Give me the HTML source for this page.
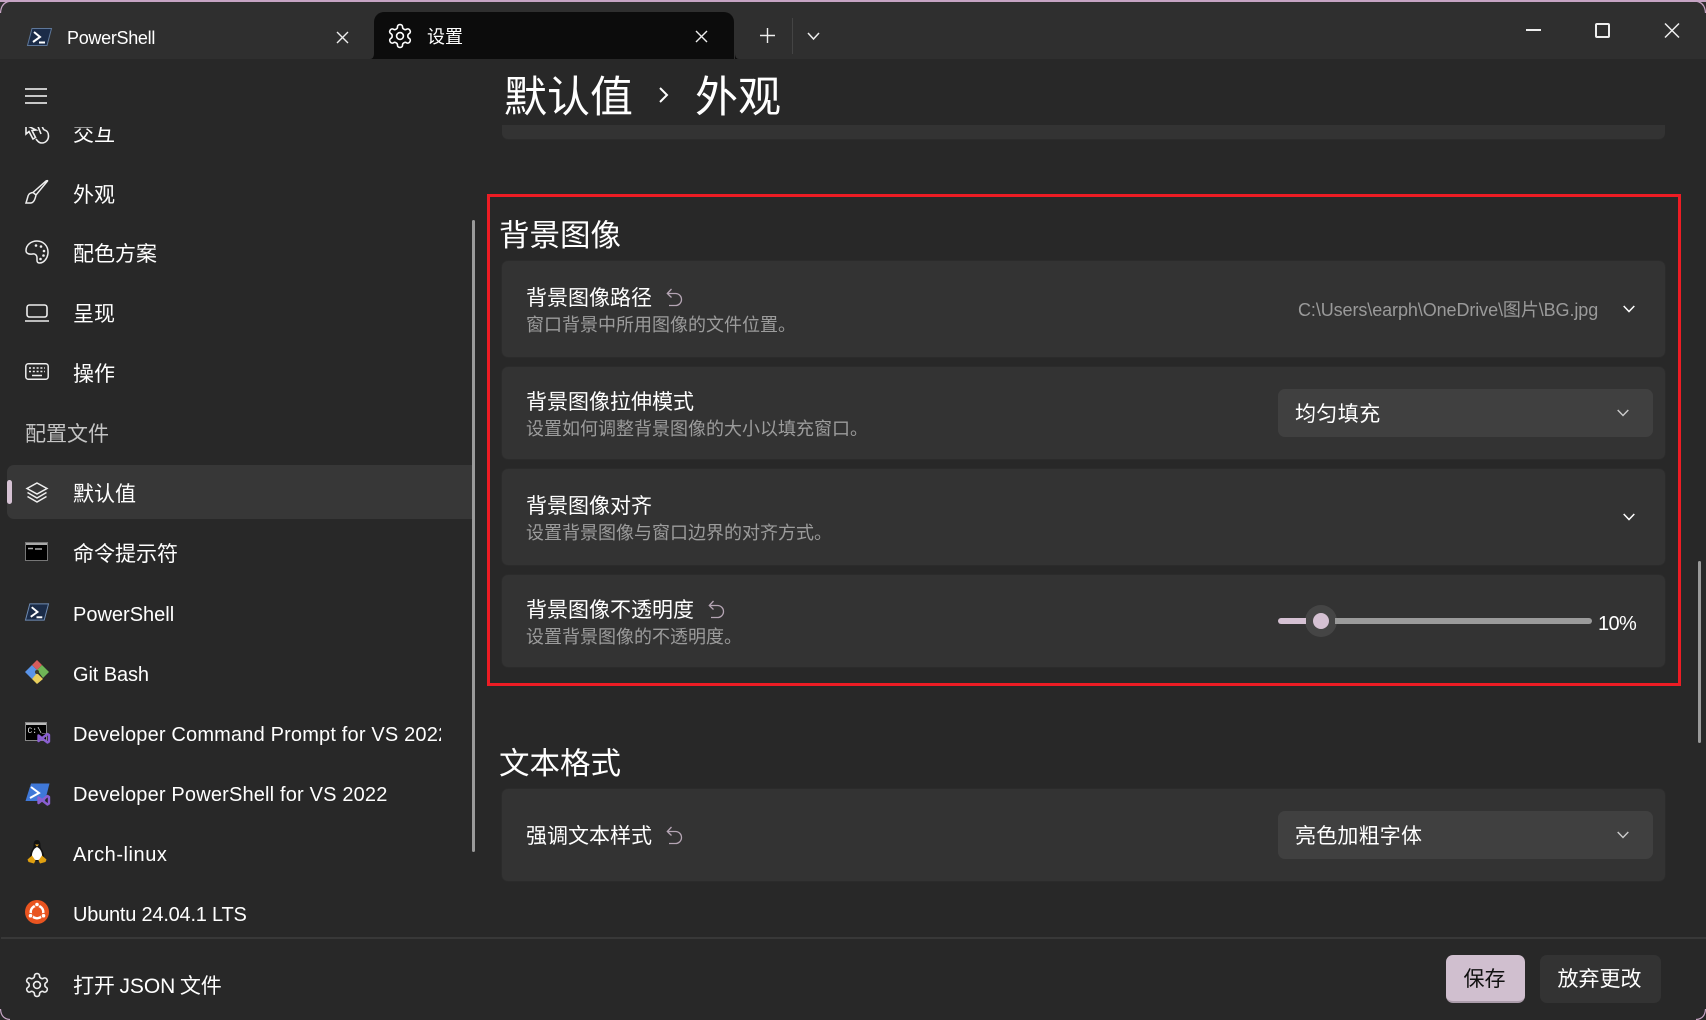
<!DOCTYPE html>
<html lang="zh-CN"><head><meta charset="utf-8"><title>设置</title>
<style>
*{box-sizing:border-box;margin:0;padding:0}
html,body{width:1706px;height:1020px;overflow:hidden;background:#282828}
body{position:relative;font-family:"Liberation Sans","Noto Sans CJK SC",sans-serif;color:#fff}
.a{position:absolute}
.t{position:absolute;white-space:nowrap;line-height:30px;height:30px}
.nav{font-size:21px;left:73px}
.en{font-size:20px;letter-spacing:-.1px}
.card{position:absolute;left:502px;width:1163px;background:#333;border-radius:6px;box-shadow:0 0 0 1px #2b2b2b}
.ti{font-size:21px;left:526px}
.de{font-size:18px;left:526px;color:#9c9c9c}
.h2{font-size:30.5px;left:499px;line-height:40px;height:40px}
.combo{position:absolute;left:1278px;width:375px;height:48px;background:#404040;border-radius:7px}
svg{position:absolute;overflow:visible;fill:none}
</style></head><body>

<!-- title bar -->
<div class="a" style="left:0;top:0;width:1706px;height:59px;background:#2f2f2f"></div>
<div class="a" style="left:0;top:0;width:1706px;height:1.5px;background:#c6a4c4"></div>
<svg style="left:0;top:0" width="1706" height="1020">
<path d="M0.5 13Q1 1.5 12 1" stroke="#c6a4c4" stroke-width="1.2"/>
<path d="M1705.5 13Q1705 1.5 1694 1" stroke="#c6a4c4" stroke-width="1.2"/>
<path d="M0.5 1009Q1 1019 10 1019.5" stroke="#c6a4c4" stroke-width="1.2"/>
<path d="M1705.5 1009Q1705 1019 1696 1019.5" stroke="#c6a4c4" stroke-width="1.2"/>
</svg>

<!-- tab 1 -->
<svg style="left:27px;top:28px" width="25" height="18" viewBox="0 0 25 18"><path d="M5 .5H24.5L20 17.5H.5Z" fill="#1b2c48" stroke="#5e7799"/><path d="M7 4L13 9L6 14" stroke="#fff" stroke-width="2"/><path d="M12 14.5H18" stroke="#fff" stroke-width="2"/></svg>
<div class="t" style="left:67px;top:23px;font-size:18px;letter-spacing:-.3px">PowerShell</div>
<svg style="left:336px;top:31px" width="13" height="13" stroke="#eee" stroke-width="1.4"><path d="M1 1L12 12M12 1L1 12"/></svg>

<!-- tab 2 -->
<div class="a" style="left:374px;top:12px;width:360px;height:47px;background:#0c0c0c;border-radius:10px 10px 0 0"></div>
<svg style="left:370px;top:53px" width="370" height="6" fill="#0c0c0c"><path d="M0 6Q4 6 4 0V6ZM369 6Q365 6 365 0V6Z" fill="#0c0c0c"/></svg>
<svg style="left:388px;top:24px" width="24" height="24" viewBox="1.5 1.5 21 21" stroke="#fff" stroke-width="1.4"><path d="M12.22 2h-.44a2 2 0 0 0-2 2v.18a2 2 0 0 1-1 1.73l-.43.25a2 2 0 0 1-2 0l-.15-.08a2 2 0 0 0-2.73.73l-.22.38a2 2 0 0 0 .73 2.73l.15.1a2 2 0 0 1 1 1.72v.51a2 2 0 0 1-1 1.74l-.15.09a2 2 0 0 0-.73 2.73l.22.38a2 2 0 0 0 2.73.73l.15-.08a2 2 0 0 1 2 0l.43.25a2 2 0 0 1 1 1.73V20a2 2 0 0 0 2 2h.44a2 2 0 0 0 2-2v-.18a2 2 0 0 1 1-1.73l.43-.25a2 2 0 0 1 2 0l.15.08a2 2 0 0 0 2.73-.73l.22-.39a2 2 0 0 0-.73-2.73l-.15-.08a2 2 0 0 1-1-1.74v-.5a2 2 0 0 1 1-1.74l.15-.09a2 2 0 0 0 .73-2.73l-.22-.38a2 2 0 0 0-2.73-.73l-.15.08a2 2 0 0 1-2 0l-.43-.25a2 2 0 0 1-1-1.73V4a2 2 0 0 0-2-2z"/><circle cx="12" cy="12" r="3"/></svg>
<div class="t" style="left:427px;top:22px;font-size:18px">设置</div>
<svg style="left:695px;top:30px" width="13" height="13" stroke="#eee" stroke-width="1.4"><path d="M1 1L12 12M12 1L1 12"/></svg>

<!-- new tab -->
<svg style="left:760px;top:28px" width="15" height="15" stroke="#eee" stroke-width="1.4"><path d="M7.5 0V15M0 7.5H15"/></svg>
<div class="a" style="left:792px;top:18px;width:1px;height:36px;background:#444"></div>
<svg style="left:807px;top:32px" width="13" height="8" stroke="#eee" stroke-width="1.5"><path d="M1 1L6.5 7L12 1"/></svg>

<!-- window controls -->
<div class="a" style="left:1526px;top:29px;width:15px;height:2px;background:#eee"></div>
<div class="a" style="left:1595px;top:23px;width:15px;height:15px;border:2px solid #eee;border-radius:2px"></div>
<svg style="left:1664px;top:23px" width="16" height="15" stroke="#eee" stroke-width="1.5"><path d="M1 .5L15 14.5M15 .5L1 14.5"/></svg>

<!-- page heading -->
<div class="t" style="left:504px;top:73px;font-size:43px;line-height:50px;height:50px">默认值</div>
<svg style="left:658px;top:86px" width="11" height="18" stroke="#fff" stroke-width="2"><path d="M2 2L9 9L2 16"/></svg>
<div class="t" style="left:695px;top:73px;font-size:43px;line-height:50px;height:50px">外观</div>

<!-- scrolled card remnant -->
<div class="a" style="left:502px;top:125px;width:1163px;height:14px;background:#333;border-radius:0 0 6px 6px;box-shadow:0 1px 0 #2b2b2b"></div>

<!-- background image section -->
<div class="t h2" style="top:216px">背景图像</div>

<div class="card" style="top:261px;height:96px"></div>
<div class="t ti" style="top:284px">背景图像路径</div>
<svg style="left:666px;top:288px" width="16" height="19" viewBox="0 0 16 19" stroke="#b5a5b4" stroke-width="1.3"><path d="M5.5 1L1.3 5.5L5.5 9.5M1.5 5.5H9.5A4.9 4.9 0 0 1 9.5 17.5H3"/></svg>
<div class="t de" style="top:310px">窗口背景中所用图像的文件位置。</div>
<div class="t" style="left:1298px;top:295px;font-size:18px;color:#9a9a9a;letter-spacing:-.09px">C:\Users\earph\OneDrive\图片\BG.jpg</div>
<svg style="left:1623px;top:305px" width="12" height="8" stroke="#fff" stroke-width="1.5"><path d="M.7 1L6 6.5L11.3 1"/></svg>

<div class="card" style="top:367px;height:92px"></div>
<div class="t ti" style="top:388px">背景图像拉伸模式</div>
<div class="t de" style="top:414px">设置如何调整背景图像的大小以填充窗口。</div>
<div class="combo" style="top:389px"></div>
<div class="t" style="left:1295px;top:400px;font-size:21px;letter-spacing:.4px">均匀填充</div>
<svg style="left:1617px;top:409px" width="12" height="8" stroke="#ccc" stroke-width="1.4"><path d="M.7 1L6 6.5L11.3 1"/></svg>

<div class="card" style="top:469px;height:96px"></div>
<div class="t ti" style="top:492px">背景图像对齐</div>
<div class="t de" style="top:518px">设置背景图像与窗口边界的对齐方式。</div>
<svg style="left:1623px;top:513px" width="12" height="8" stroke="#fff" stroke-width="1.5"><path d="M.7 1L6 6.5L11.3 1"/></svg>

<div class="card" style="top:575px;height:92px"></div>
<div class="t ti" style="top:596px">背景图像不透明度</div>
<svg style="left:708px;top:600px" width="16" height="19" viewBox="0 0 16 19" stroke="#b5a5b4" stroke-width="1.3"><path d="M5.5 1L1.3 5.5L5.5 9.5M1.5 5.5H9.5A4.9 4.9 0 0 1 9.5 17.5H3"/></svg>
<div class="t de" style="top:622px">设置背景图像的不透明度。</div>
<div class="a" style="left:1305px;top:605px;width:32px;height:32px;background:#454545;border-radius:50%"></div>
<div class="a" style="left:1278px;top:618px;width:28px;height:6px;background:#d5c1d3;border-radius:3px 0 0 3px"></div>
<div class="a" style="left:1335px;top:618px;width:257px;height:6px;background:#9b9b9b;border-radius:0 3px 3px 0"></div>
<div class="a" style="left:1313px;top:613px;width:16px;height:16px;background:#d5c1d3;border-radius:50%"></div>
<div class="t" style="left:1598px;top:609px;font-size:20px;letter-spacing:-.6px">10%</div>

<!-- red annotation -->
<div class="a" style="left:487px;top:194px;width:1194px;height:492px;border:3px solid #ed1c24"></div>

<!-- text format section -->
<div class="t h2" style="top:744px">文本格式</div>
<div class="card" style="top:789px;height:92px"></div>
<div class="t ti" style="top:822px">强调文本样式</div>
<svg style="left:666px;top:826px" width="16" height="19" viewBox="0 0 16 19" stroke="#b5a5b4" stroke-width="1.3"><path d="M5.5 1L1.3 5.5L5.5 9.5M1.5 5.5H9.5A4.9 4.9 0 0 1 9.5 17.5H3"/></svg>
<div class="combo" style="top:811px"></div>
<div class="t" style="left:1295px;top:822px;font-size:21px;letter-spacing:.2px">亮色加粗字体</div>
<svg style="left:1617px;top:831px" width="12" height="8" stroke="#ccc" stroke-width="1.4"><path d="M.7 1L6 6.5L11.3 1"/></svg>

<!-- hamburger -->
<div class="a" style="left:25px;top:88px;width:22px;height:1.6px;background:#c8c8c8"></div>
<div class="a" style="left:25px;top:95px;width:22px;height:1.6px;background:#c8c8c8"></div>
<div class="a" style="left:25px;top:102px;width:22px;height:1.6px;background:#c8c8c8"></div>

<!-- sidebar selection and scrollbar -->
<div class="a" style="left:7px;top:465px;width:465px;height:54px;background:#373737;border-radius:7px 0 0 7px"></div>
<div class="a" style="left:7px;top:480px;width:5px;height:24px;background:#d5c1d3;border-radius:3px"></div>
<div class="a" style="left:472px;top:220px;width:3px;height:632px;background:#9a9a9a;border-radius:2px"></div>
<div class="a" style="left:1698px;top:561px;width:3px;height:182px;background:#9a9a9a;border-radius:2px"></div>

<!-- nav -->
<div class="a" style="left:0;top:0;width:471px;height:938px;clip-path:inset(127px 0 0 0)">
<svg style="left:25px;top:119px" width="24" height="24" viewBox="0 0 24 24" stroke="#eee" stroke-width="1.6"><path d="M1 6V15L4 12.5L8 20L10.5 18.5L7 11.5L11 11L1 6ZM12 5L16 15M16 5C18 9 18 10.5 19.5 11C22 11.5 23.5 14 23.5 17C23.5 21 20.5 24 17 24C14 24 13 22.5 11 20"/></svg>
<div class="t nav" style="top:120px">交互</div>

<svg style="left:25px;top:180px" width="24" height="24" viewBox="0 0 24 24" stroke="#eee" stroke-width="1.5"><path d="M22.5 1L11 15L8 12.5L21 1C22 .5 23 .5 22.5 1ZM8 12.5C4 13 3 15 2.5 18L1 23H5.5C8 23 10 20 11 15"/></svg>
<div class="t nav" style="top:181px">外观</div>

<svg style="left:25px;top:240px" width="24" height="24" viewBox="0 0 24 24" stroke="#eee" stroke-width="1.5"><path d="M12 1C18.5 1 23 6 23 12C23 18 19 23 14.5 23C11.5 23 12 20 12 18C12 15 10 13.5 7.5 14C5 14.5 1 14 1 10.5C1 5 6 1 12 1Z"/><g fill="#eee" stroke="none"><circle cx="11" cy="5.5" r="1.3"/><circle cx="16" cy="6.5" r="1.3"/><circle cx="19" cy="11" r="1.3"/><circle cx="18.5" cy="15.5" r="1.3"/><circle cx="15.5" cy="19" r="1.3"/></g></svg>
<div class="t nav" style="top:240px">配色方案</div>

<svg style="left:25px;top:304px" width="24" height="18" viewBox="0 0 24 18" stroke="#eee" stroke-width="1.6"><rect x="2" y="1" width="20" height="12" rx="2.5"/><path d="M0 17H24"/></svg>
<div class="t nav" style="top:300px">呈现</div>

<svg style="left:25px;top:363px" width="24" height="17" viewBox="0 0 24 17" stroke="#eee" stroke-width="1.5"><rect x=".8" y=".8" width="22.4" height="15.4" rx="2.5"/><path d="M4 5H20M4 8.5H20" stroke-dasharray="2 1.8"/><path d="M7 12.5H17"/></svg>
<div class="t nav" style="top:360px">操作</div>

<div class="t nav" style="top:420px;left:25px;color:#c4c4c4">配置文件</div>

<svg style="left:26px;top:482px" width="22" height="21" viewBox="0 0 22 21" stroke="#eee" stroke-width="1.5"><path d="M11 1L21 6.5L11 12L1 6.5Z"/><path d="M1.5 10.5L11 16L20.5 10.5M1.5 14.5L11 20L20.5 14.5"/></svg>
<div class="t nav" style="top:480px">默认值</div>

<svg style="left:25px;top:542px" width="23" height="19" viewBox="0 0 23 19"><rect x=".5" y=".5" width="22" height="18" fill="#000" stroke="#777"/><rect x="1" y="1" width="21" height="2" fill="#aaa"/><path d="M3 6.5H8M10 7H17" stroke="#aaa" stroke-width="1.5"/></svg>
<div class="t nav" style="top:540px">命令提示符</div>

<svg style="left:25px;top:603px" width="24" height="18" viewBox="0 0 25 18"><path d="M5 .5H24.5L20 17.5H.5Z" fill="#1b2c48" stroke="#6f8cb4"/><path d="M7 4L13 9L6 14" stroke="#fff" stroke-width="2"/><path d="M12 14.5H18" stroke="#fff" stroke-width="2"/></svg>
<div class="t nav en" style="top:600px;letter-spacing:0">PowerShell</div>

<svg style="left:25px;top:660px" width="24" height="24" viewBox="0 0 24 24"><path d="M0 12L7 5L14 12L7 19Z" fill="#5a94e8"/><path d="M7 5L12 0L17 5L12 10Z" fill="#d75c5c"/><path d="M12 10L17 5L24 12L18 18Z" fill="#6fb556"/><path d="M7 19L12 13L18 19L12 24Z" fill="#e9cf5c"/><circle cx="12" cy="12" r="2" fill="#3c3c28"/></svg>
<div class="t nav en" style="top:660px">Git Bash</div>

<svg style="left:25px;top:722px" width="25" height="23" viewBox="0 0 25 23"><rect x=".5" y=".5" width="21" height="18" fill="#000" stroke="#888"/><rect x="1" y="1" width="20" height="2" fill="#bbb"/><text x="2.5" y="11" font-size="8" fill="#eee" font-family="Liberation Mono">C:\_</text><path d="M13.5 13.5L22.5 20.5L24 19.5V13L22.5 12L13.5 19Z" stroke="#8a5fd1" stroke-width="2.4" stroke-linejoin="round"/></svg>
<div class="a" style="left:0;top:720px;width:441px;height:30px;overflow:hidden"><div class="t nav en" style="top:0;letter-spacing:.17px">Developer Command Prompt for VS 2022</div></div>

<svg style="left:25px;top:783px" width="25" height="24" viewBox="0 0 25 24"><path d="M6 .5H24.5L20 18H.5Z" fill="#3f78d8"/><path d="M6 4L14 10L5 15" stroke="#fff" stroke-width="2"/><path d="M13.5 14.5L22.5 21.5L24 20.5V14L22.5 13L13.5 20Z" stroke="#8a5fd1" stroke-width="2.4" stroke-linejoin="round"/></svg>
<div class="t nav en" style="top:780px;letter-spacing:.17px">Developer PowerShell for VS 2022</div>

<svg style="left:27px;top:840px" width="20" height="24" viewBox="0 0 20 24"><path d="M10 0C7 0 6.5 3 6.5 6C6.5 9 3 11 3 16C3 19 6 21 10 21C14 21 17 19 17 16C17 11 13.5 9 13.5 6C13.5 3 13 0 10 0Z" fill="#111"/><path d="M10 7C6.5 8.5 4.5 13 5 17C5.5 21 14.5 21 15 17C15.5 13 13.5 8.5 10 7Z" fill="#fff"/><path d="M8 4.5L10 6.5L12 4.5Z" fill="#e8a820"/><path d="M5 15.5L.5 19.5L1.5 22L7 23.5L8.5 20.5ZM15 15.5L19.5 19.5L18.5 22L13 23.5L11.5 20.5Z" fill="#e0a010"/></svg>
<div class="t nav en" style="top:840px;letter-spacing:.55px">Arch-linux</div>

<svg style="left:25px;top:900px" width="24" height="24" viewBox="0 0 24 24"><circle cx="12" cy="12" r="12" fill="#e95420"/><circle cx="12" cy="12" r="6.3" stroke="#fff" stroke-width="2.4"/><g fill="#fff" stroke="#e95420" stroke-width="1"><circle cx="12" cy="4.5" r="2.3"/><circle cx="5.5" cy="15.7" r="2.3"/><circle cx="18.5" cy="15.7" r="2.3"/></g></svg>
<div class="t nav en" style="top:900px;letter-spacing:-.22px">Ubuntu 24.04.1 LTS</div>
</div>

<!-- footer -->
<div class="a" style="left:1px;top:937px;width:1705px;height:2px;background:#383838"></div>
<svg style="left:25px;top:973px" width="24" height="24" viewBox="1.5 1.5 21 21" stroke="#eee" stroke-width="1.4"><path d="M12.22 2h-.44a2 2 0 0 0-2 2v.18a2 2 0 0 1-1 1.73l-.43.25a2 2 0 0 1-2 0l-.15-.08a2 2 0 0 0-2.73.73l-.22.38a2 2 0 0 0 .73 2.73l.15.1a2 2 0 0 1 1 1.72v.51a2 2 0 0 1-1 1.74l-.15.09a2 2 0 0 0-.73 2.73l.22.38a2 2 0 0 0 2.73.73l.15-.08a2 2 0 0 1 2 0l.43.25a2 2 0 0 1 1 1.73V20a2 2 0 0 0 2 2h.44a2 2 0 0 0 2-2v-.18a2 2 0 0 1 1-1.73l.43-.25a2 2 0 0 1 2 0l.15.08a2 2 0 0 0 2.73-.73l.22-.39a2 2 0 0 0-.73-2.73l-.15-.08a2 2 0 0 1-1-1.74v-.5a2 2 0 0 1 1-1.74l.15-.09a2 2 0 0 0 .73-2.73l-.22-.38a2 2 0 0 0-2.73-.73l-.15.08a2 2 0 0 1-2 0l-.43-.25a2 2 0 0 1-1-1.73V4a2 2 0 0 0-2-2z"/><circle cx="12" cy="12" r="3"/></svg>
<div class="t nav" style="top:972px;word-spacing:-1px;letter-spacing:-.1px">打开 JSON 文件</div>

<div class="a" style="left:1446px;top:955px;width:79px;height:48px;background:#d0bfcf;border-radius:7px;border-bottom:2px solid #ab9caa"></div>
<div class="t" style="left:1445px;width:79px;text-align:center;top:965px;font-size:21px;color:#111">保存</div>
<div class="a" style="left:1540px;top:955px;width:121px;height:48px;background:#333;border-radius:7px"></div>
<div class="t" style="left:1539px;width:121px;text-align:center;top:965px;font-size:21px">放弃更改</div>

</body></html>
